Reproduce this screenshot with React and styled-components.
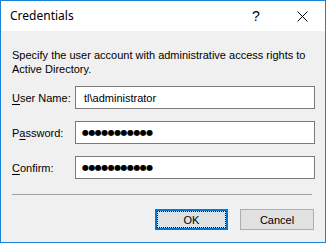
import React from "react";
import styled, { createGlobalStyle } from "styled-components";

const Global = createGlobalStyle`
  html, body { margin: 0; padding: 0; background: #ffffff; }
  * { box-sizing: border-box; }
`;

const Window = styled.div`
  width: 326px;
  height: 243px;
  border: 1px solid #1883d7;
  background: #f0f0f0;
  display: flex;
  flex-direction: column;
  font-family: "Liberation Sans", Arial, sans-serif;
  font-size: 11px;
  color: #000;
  overflow: hidden;
`;

const TitleBar = styled.div`
  height: 30px;
  background: #ffffff;
  display: flex;
  align-items: center;
  padding-left: 9px;
`;

const Title = styled.div`
  flex: 1;
  font-family: "Noto Sans", "Open Sans", sans-serif;
  font-size: 12px;
  line-height: 30px;
  padding-bottom: 1px;
`;

const CaptionButton = styled.div`
  width: 46px;
  height: 30px;
  display: flex;
  align-items: center;
  justify-content: center;
  font-family: "Liberation Sans", sans-serif;
  font-size: 14px;
`;

const Content = styled.div`
  flex: 1;
  display: flex;
  flex-direction: column;
  padding: 17px 11px 12px 11px;
`;

const Description = styled.p`
  margin: 0;
  line-height: 14px;
  height: 28px;
`;

const Form = styled.div`
  margin-top: 10px;
  display: grid;
  grid-template-columns: 63px 240px;
  row-gap: 12px;
  align-items: center;
`;

const Label = styled.label`
  line-height: 14px;
  padding-top: 1px;
`;

const Key = styled.span`
  text-decoration: underline;
  text-underline-offset: 2px;
`;

const Field = styled.div`
  height: 23px;
  border: 1px solid #7a7a7a;
  background: #ffffff;
  display: flex;
  align-items: center;
  padding-left: ${(p) => (p.$secret ? "6px" : "8px")};
  padding-bottom: ${(p) => (p.$secret ? "1px" : "0")};
  font-size: ${(p) => (p.$secret ? "8px" : "11px")};
  letter-spacing: ${(p) => (p.$secret ? "-0.55px" : "0")};
  font-family: ${(p) => (p.$secret ? "\"DejaVu Sans\", sans-serif" : "\"Liberation Sans\", Arial, sans-serif")};
`;

const Separator = styled.div`
  margin-top: 15px;
  margin-right: 2px;
  height: 1px;
  background: #a0a0a0;
`;

const ButtonRow = styled.div`
  margin-top: 14px;
  display: flex;
  justify-content: flex-end;
  gap: 12px;
`;

const Button = styled.button`
  width: ${(p) => (p.$default ? "73px" : "74px")};
  height: 21px;
  margin: 0;
  padding: 0;
  font-family: "Liberation Sans", Arial, sans-serif;
  font-size: 11px;
  color: #000;
  background: #e1e1e1;
  border: ${(p) => (p.$default ? "2px solid #0078d7" : "1px solid #adadad")};
  outline: ${(p) => (p.$default ? "1px dotted #000" : "none")};
  outline-offset: -3px;
  display: flex;
  align-items: center;
  justify-content: center;
`;

const CloseIcon = () => (
  <svg width="11" height="11" viewBox="0 0 11 11">
    <path d="M0.5 0.5 L10.5 10.5 M10.5 0.5 L0.5 10.5" stroke="#000" strokeWidth="1" fill="none" />
  </svg>
);

export default function App() {
  return (
    <>
      <Global />
      <Window>
        <TitleBar>
          <Title>Credentials</Title>
          <CaptionButton>?</CaptionButton>
          <CaptionButton>
            <CloseIcon />
          </CaptionButton>
        </TitleBar>
        <Content>
          <Description>
            Specify the user account with administrative access rights to Active Directory.
          </Description>
          <Form>
            <Label>
              <Key>U</Key>ser Name:
            </Label>
            <Field>tl\administrator</Field>
            <Label>
              P<Key>a</Key>ssword:
            </Label>
            <Field $secret>●●●●●●●●●●●</Field>
            <Label>
              <Key>C</Key>onfirm:
            </Label>
            <Field $secret>●●●●●●●●●●●</Field>
          </Form>
          <Separator />
          <ButtonRow>
            <Button $default>OK</Button>
            <Button>Cancel</Button>
          </ButtonRow>
        </Content>
      </Window>
    </>
  );
}
